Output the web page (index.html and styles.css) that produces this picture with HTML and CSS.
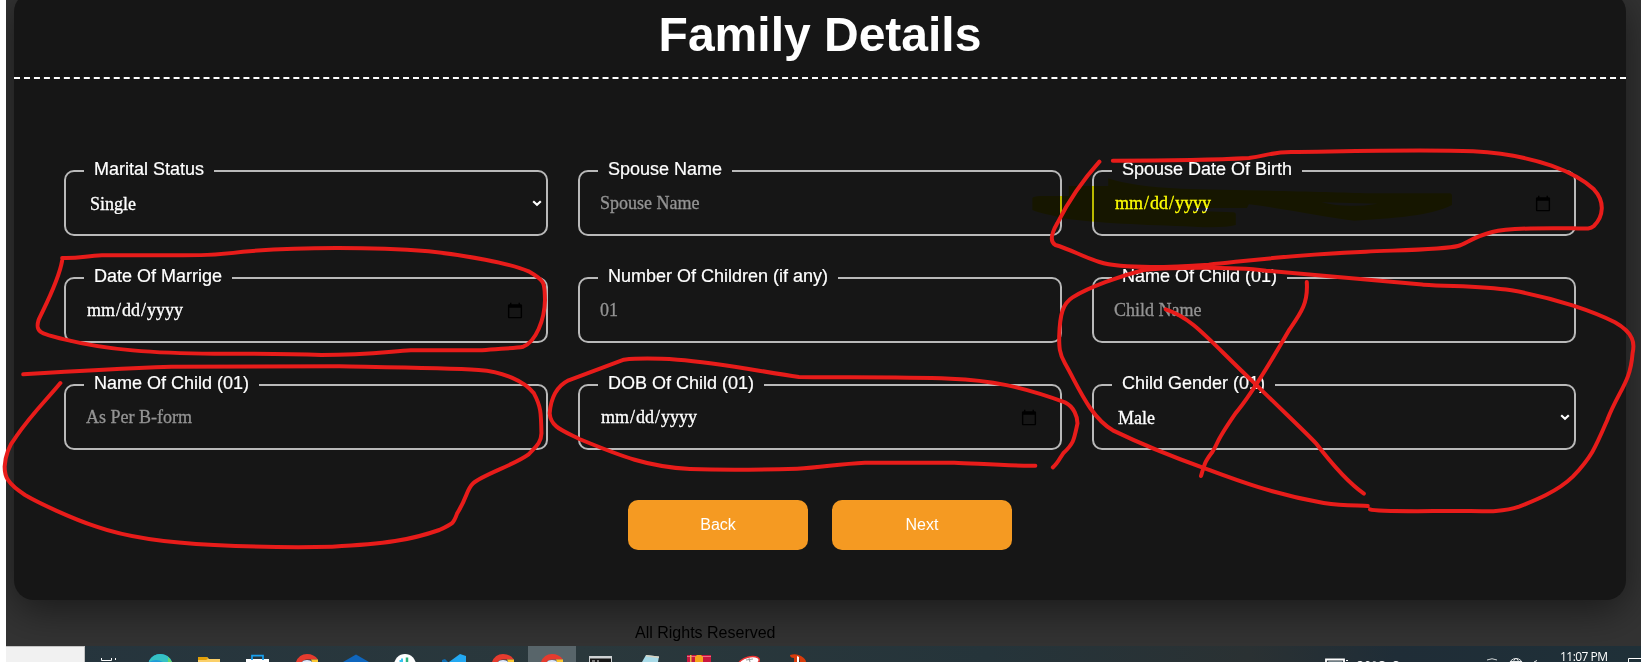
FILE: index.html
```html
<!DOCTYPE html>
<html lang="en">
<head>
<meta charset="utf-8">
<title>Family Details</title>
<link rel="stylesheet" href="styles.css">
</head>
<body>
<div class="screen">
  <main class="page">
    <form class="card">
      <h1 class="card-title">Family Details</h1>
      <div class="fields">
        <div class="field">
          <label class="field-label" for="status">Marital Status</label>
          <select class="control" id="status"><option>Single</option><option>Married</option></select>
          <svg class="chevron" width="10" height="7" viewBox="0 0 10 7"><path d="M1.200 1.200L5 4.800L8.800 1.200"/></svg>
        </div>
        <div class="field">
          <label class="field-label" for="spouse">Spouse Name</label>
          <input class="control" id="spouse" type="text" placeholder="Spouse Name">
        </div>
        <div class="field">
          <label class="field-label" for="spouse-dob">Spouse Date Of Birth</label>
          <input class="control" id="spouse-dob" type="date">
        </div>
        <div class="field">
          <label class="field-label" for="marriage">Date Of Marrige</label>
          <input class="control" id="marriage" type="date">
        </div>
        <div class="field">
          <label class="field-label" for="children">Number Of Children (if any)</label>
          <input class="control" id="children" type="text" placeholder="01">
        </div>
        <div class="field">
          <label class="field-label" for="child">Name Of Child (01)</label>
          <input class="control" id="child" type="text" placeholder="Child Name">
        </div>
        <div class="field">
          <label class="field-label" for="child-b">Name Of Child (01)</label>
          <input class="control" id="child-b" type="text" placeholder="As Per B-form">
        </div>
        <div class="field">
          <label class="field-label" for="child-dob">DOB Of Child (01)</label>
          <input class="control" id="child-dob" type="date">
        </div>
        <div class="field">
          <label class="field-label" for="gender">Child Gender (01)</label>
          <select class="control" id="gender"><option>Male</option><option>Female</option></select>
          <svg class="chevron" width="10" height="7" viewBox="0 0 10 7"><path d="M1.200 1.200L5 4.800L8.800 1.200"/></svg>
        </div>
      </div>
      <div class="actions">
        <button class="btn" type="button">Back</button>
        <button class="btn" type="button">Next</button>
      </div>
    </form>
    <footer class="footer">All Rights Reserved</footer>
  </main>

  <div class="taskbar">
    <svg class="taskbar-art" width="1641" height="16" viewBox="0 646 1641 16">
      <rect x="6" y="646" width="79" height="16" fill="#c4c4c4"/>
      <rect x="6" y="647" width="78" height="15" fill="#f1f1f1"/>
      <rect x="528" y="646" width="48" height="16" fill="#58656a"/>
      <path d="M101.500 658v2.500h10V658M115.500 658v2" fill="none" stroke="#fff"/>
      <circle cx="160" cy="666" r="12" fill="#1f9bd8"/>
      <path d="M149 661Q153 654 160 654Q169 654 172 662H163Q156 658 149 662Z" fill="#35c1c4"/>
      <path d="M168 657L172 662H168Z" fill="#6ad96a"/>
      <path d="M198 657H207L209 659H220V662H198Z" fill="#fbd069"/>
      <path d="M198 657H207L208 659L206 660H198Z" fill="#e3a008"/>
      <rect x="246" y="659" width="23" height="4" fill="#fff"/>
      <path d="M252 660V655.700H263V660" fill="none" stroke="#18a0ee" stroke-width="1.700"/>
      <path d="M296 662Q299 654 307 654Q314 654 318 659.500H307Q303 659.500 302 662Z" fill="#e63b2e"/>
      <path d="M311 659.500H318V662H312Z" fill="#fcc934"/>
      <path d="M302 662Q303 660 307 660Q311 660 312 662Z" fill="#dfe8fb"/>
      <path d="M343 662L356 654.500L369 662Z" fill="#0f66bd"/>
      <circle cx="405" cy="665" r="11" fill="#fff"/>
      <path d="M402 658.500V662M399.500 661H402" stroke="#36c5f0" stroke-width="2"/>
      <path d="M407 657.500V662" stroke="#2eb67d" stroke-width="2.500"/>
      <path d="M449 662L460 654L466 656V662Z" fill="#23a9f2"/>
      <path d="M442 660L445 659L448 662H442Z" fill="#0e70b5"/>
      <path d="M492 662Q495 654 503 654Q510 654 514 659.500H503Q499 659.500 498 662Z" fill="#e63b2e"/>
      <path d="M507 659.500H514V662H508Z" fill="#fcc934"/>
      <path d="M498 662Q499 660 503 660Q507 660 508 662Z" fill="#dfe8fb"/>
      <path d="M541 662Q544 654 552 654Q559 654 563 659.500H552Q548 659.500 547 662Z" fill="#e63b2e"/>
      <path d="M556 659.500H563V662H557Z" fill="#fcc934"/>
      <path d="M547 662Q548 660 552 660Q556 660 557 662Z" fill="#dfe8fb"/>
      <rect x="589" y="656" width="23" height="7" fill="#cfd2d4"/>
      <rect x="590" y="658.500" width="21" height="5" fill="#161616"/>
      <path d="M592 661H595M597 661H599" stroke="#ddd"/>
      <path d="M642 662L646 655L659 656.500L658 662Z" fill="#a9dbe8"/>
      <path d="M646 655L659 656.500V658L646 656.500Z" fill="#d9d2c0"/>
      <rect x="687" y="655" width="24" height="7" fill="#c9183f"/>
      <path d="M687 656.500H711" stroke="#ee6b83"/>
      <rect x="690" y="655" width="1.500" height="7" fill="#e6b944"/>
      <path d="M695 662V657L697 655H701L703 657V662Z" fill="#f5a71c"/>
      <ellipse cx="749" cy="662" rx="10.500" ry="5" transform="rotate(-15 749 662)" fill="#fff" stroke="#e33" stroke-width="1.500"/>
      <path d="M746 660L753 659M749 658L750 662" stroke="#999"/>
      <path d="M790 655Q796 653 801 656Q806 659 806 662H800L799 658L797 657V662H794V658Q790 658 790 655Z" fill="#d83b0b"/>
      <path d="M797 656L799 657V662H797Z" fill="#fff"/>
      <path d="M1326 662V659.500H1344V662" fill="none" stroke="#fff" stroke-width="1.800"/>
      <path d="M1328.500 662V661.500H1342V662" stroke="#718087" fill="none"/>
      <path d="M1346 660.500h2" stroke="#fff"/>
      <text x="1357" y="669.500" class="tray-text" textLength="72">30°C&#160;&#160;Sunny</text>
      <path d="M1487 660Q1492 657.500 1497 660" fill="none" stroke="#cfd4d6"/>
      <circle cx="1516" cy="665.500" r="7" fill="none" stroke="#e5e8e9"/>
      <ellipse cx="1516" cy="665.500" rx="3" ry="7" fill="none" stroke="#e5e8e9"/>
      <path d="M1510 661.500h12M1534 662l3-1.500" stroke="#e5e8e9"/>
      <text x="1560" y="661" class="tray-text" textLength="48">11:07 PM</text>
      <path d="M1628.500 662V658.500H1641" fill="none" stroke="#fff"/>
    </svg>
  </div>

  <svg class="markup marker" width="1641" height="662" viewBox="0 0 1641 662">
    <!-- highlighter -->
    <g transform="translate(1040 130) scale(.38329 .33333)">
      <path fill="#ff0" fill-rule="evenodd" d="M-20 204Q-18 199 0 198H75V168H178V145Q240 170 370 176C500 180 750 185 860 190H1069Q1075 190 1075 198V225C1020 258 920 265 820 272C740 262 660 240 545 223L540 234H395V242L505 247Q511 247 511 253V285Q480 295 400 290C270 285 150 280 60 265C30 255 0 250 -20 240ZM735 217Q800 236 880 221Z"/>
    </g>
  </svg>
  <svg class="markup pen" width="1641" height="662" viewBox="0 0 1641 662">
    <!-- spouse date of birth; crossed-out child -->
    <g transform="translate(1040 130) scale(.38329 .33333)">
      <path d="M190 92C300 92 450 90 545 84C590 78 600 67 655 66C800 64 1000 58 1130 64C1300 75 1400 130 1445 178C1475 215 1470 260 1445 288C1435 298 1425 296 1390 295C1330 294 1220 294 1180 306C1130 320 1110 343 1090 348C1060 358 950 360 850 365C650 375 560 390 440 404C300 415 200 412 155 396C110 380 80 358 40 345C25 335 30 310 45 280C80 200 120 140 155 95"/>
    </g>
    <g transform="translate(1040 250) scale(.38329 .33333)">
      <path d="M855 768C840 764 800 770 740 759C600 730 500 685 430 655C350 622 260 580 190 541C130 500 100 410 65 340C50 310 50 290 50 260C52 190 60 160 85 142C130 110 210 78 270 60C340 52 500 50 590 62C700 72 850 90 1000 104C1080 110 1150 108 1230 121C1350 145 1450 188 1500 217C1550 250 1552 280 1546 310C1540 400 1510 420 1480 510C1450 590 1440 620 1390 680C1350 725 1290 752 1250 770C1200 790 1140 782 1080 783C1000 783 880 786 861 778"/>
      <path d="M328 178C400 205 440 270 560 400C640 490 700 555 720 580C760 640 800 695 845 731"/>
      <path d="M696 96C700 160 680 190 650 240C600 340 540 450 510 490C450 590 470 570 450 605C430 635 430 640 420 678"/>
    </g>
    <!-- date of marriage; child name -->
    <g transform="translate(0 240) scale(.35714 .33333)">
      <path d="M174 62C165 120 130 190 108 240C98 275 110 280 180 298C300 330 430 340 600 341C760 341 800 340 900 345C1020 345 1080 336 1150 331L1350 331C1400 326 1440 325 1465 320C1500 305 1525 240 1526 180C1524 130 1530 125 1480 94C1430 70 1300 45 1200 34C1050 22 850 20 680 35C600 46 560 46 480 46L285 46C240 48 220 56 174 54"/>
      <path d="M65 403C180 395 340 385 480 380L950 379C1100 382 1250 384 1340 390C1410 395 1470 425 1495 460C1515 500 1515 520 1516 580C1515 610 1500 620 1480 643C1440 675 1350 705 1325 730C1305 750 1310 770 1280 820C1270 850 1270 850 1230 870C1150 900 1080 912 930 920C800 924 700 920 600 915C450 908 350 890 270 860C200 835 110 790 70 765C20 730 13 710 13 680C15 640 30 610 45 590C90 520 130 480 169 429"/>
    </g>
    <!-- child date of birth -->
    <g transform="translate(540 240) scale(.35714 .33333)">
      <path d="M1387 677C1300 678 1220 670 1160 668L910 668C830 672 790 683 720 686C600 690 500 690 420 687C300 680 230 650 110 597C60 570 30 560 27 520C30 480 45 440 80 421L235 359C280 354 340 356 385 359C500 368 620 395 725 411C850 413 1000 410 1150 416C1260 420 1350 440 1470 487C1495 500 1505 530 1505 550C1495 600 1495 610 1465 640C1455 655 1450 670 1436 682"/>
    </g>
  </svg>
</div>
</body>
</html>
```
FILE: styles.css
```css
* {
  box-sizing: border-box;
}

body {
  margin: 0;
  background: #fff;
  font-family: "Liberation Sans", Arial, sans-serif;
}

.screen {
  position: relative;
  display: flex;
  flex-direction: column;
  width: 1641px;
  height: 662px;
  overflow: hidden;
}

.page {
  height: 646px;
  margin-left: 6px;
  padding: 0 15px 0 8px;
  background: #333;
  overflow: hidden;
}

.card {
  height: 608px;
  margin-top: -8px;
  border-radius: 20px;
  background: #161616;
  box-shadow: 0 10px 40px rgba(0, 0, 0, .5);
}

.card-title {
  height: 87px;
  margin: 0;
  padding-top: 15px;
  border-bottom: 2px dashed #fff;
  color: #fff;
  font-size: 48px;
  line-height: 55px;
  text-align: center;
}

.fields {
  display: grid;
  grid-template-columns: repeat(3, 1fr);
  gap: 41px 30px;
  padding: 91px 50px 50px;
}

.field {
  position: relative;
  height: 66px;
}

.field-label {
  position: absolute;
  top: -11px;
  left: 20px;
  padding: 0 10px;
  background: #161616;
  color: #fff;
  font-size: 18px;
  line-height: 20px;
  -webkit-text-stroke: .2px #fff;
}

.control {
  display: block;
  width: 100%;
  height: 66px;
  padding: 1px 20px 0;
  border: 2px solid #b9b9b9;
  border-radius: 10px;
  outline: 0;
  background: #161616;
  color: #fff;
  font-family: "Liberation Serif", "Times New Roman", serif;
  font-size: 18px;
  -webkit-text-stroke: .3px currentColor;
}

select.control {
  appearance: none;
  padding-left: 24px;
}

.control::placeholder {
  color: #949494;
}

.chevron {
  position: absolute;
  top: 30px;
  right: 6px;
}

.chevron path {
  fill: none;
  stroke: #fff;
  stroke-width: 2.2px;
}

.actions {
  display: flex;
  justify-content: center;
  gap: 24px;
}

.btn {
  width: 180px;
  height: 50px;
  border: 0;
  border-radius: 10px;
  background: #f59a22;
  color: #fff;
  font: 16px "Liberation Sans", Arial, sans-serif;
}

.footer {
  padding: 24px 0 0 621px;
  color: #000;
  font-size: 16px;
  line-height: 18px;
}

.taskbar {
  height: 16px;
  margin-left: 6px;
  background: linear-gradient(90deg, #25343d, #2a383c 35%, #25343a 60%, #2a3133 76%, #1f2d37 85%, #1f3038);
}

.taskbar-art {
  display: block;
  margin-left: -6px;
}

.tray-text {
  fill: #fff;
  font: 12px "Open Sans", "Noto Sans", sans-serif;
}

.markup {
  position: absolute;
  inset: 0;
  pointer-events: none;
}

.marker {
  mix-blend-mode: multiply;
}

.pen path {
  fill: none;
  stroke: #e81c1a;
  stroke-width: 4px;
  stroke-linecap: round;
  stroke-linejoin: round;
  vector-effect: non-scaling-stroke;
}
```
